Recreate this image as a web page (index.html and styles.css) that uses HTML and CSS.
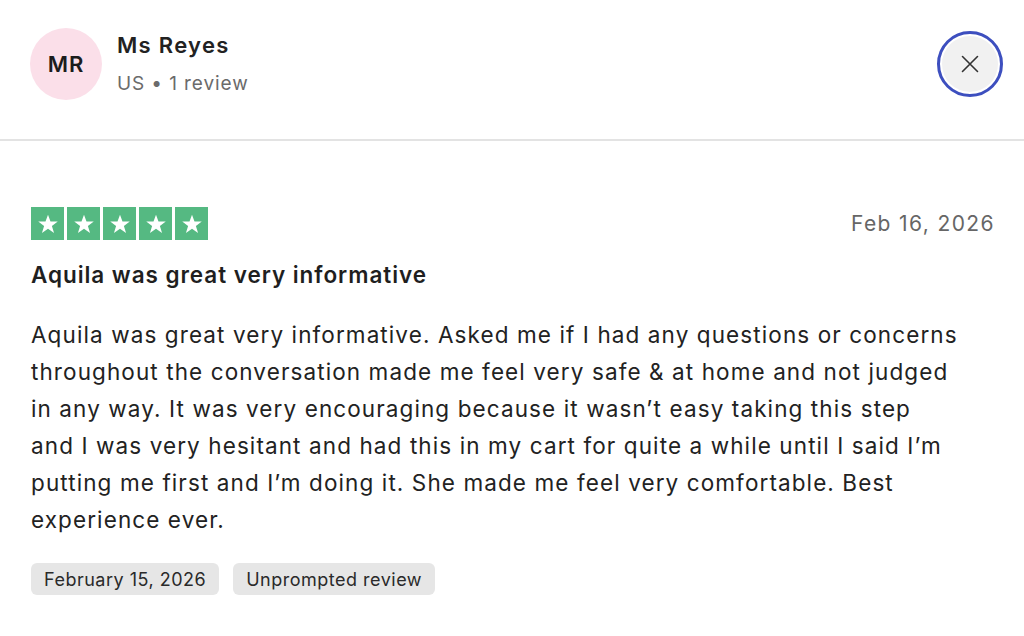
FILE: index.html
```html
<!DOCTYPE html>
<html lang="en">
<head>
<meta charset="utf-8">
<link rel="stylesheet" href="styles.css">
</head>
<body>
<div class="page">
  <header class="head">
    <div class="user">
      <div class="avatar">MR</div>
      <div class="who">
        <div class="name">Ms Reyes</div>
        <div class="meta">US • 1 review</div>
      </div>
    </div>
    <button class="close" aria-label="Close">
      <svg width="20" height="20" viewBox="0 0 20 20"><path d="M2.5 2.5L17.5 17.5M17.5 2.5L2.5 17.5" stroke="#333" stroke-width="1.6" stroke-linecap="round"/></svg>
    </button>
  </header>
  <main class="review">
    <div class="toprow">
      <div class="stars">
        <span class="star"><svg viewBox="0 0 24 24"><path d="M12 3.5l2.3 6.3h6.7l-5.4 4 2 6.5L12 16.4l-5.6 3.9 2-6.5-5.4-4h6.7z" fill="#fff"/></svg></span>
        <span class="star"><svg viewBox="0 0 24 24"><path d="M12 3.5l2.3 6.3h6.7l-5.4 4 2 6.5L12 16.4l-5.6 3.9 2-6.5-5.4-4h6.7z" fill="#fff"/></svg></span>
        <span class="star"><svg viewBox="0 0 24 24"><path d="M12 3.5l2.3 6.3h6.7l-5.4 4 2 6.5L12 16.4l-5.6 3.9 2-6.5-5.4-4h6.7z" fill="#fff"/></svg></span>
        <span class="star"><svg viewBox="0 0 24 24"><path d="M12 3.5l2.3 6.3h6.7l-5.4 4 2 6.5L12 16.4l-5.6 3.9 2-6.5-5.4-4h6.7z" fill="#fff"/></svg></span>
        <span class="star"><svg viewBox="0 0 24 24"><path d="M12 3.5l2.3 6.3h6.7l-5.4 4 2 6.5L12 16.4l-5.6 3.9 2-6.5-5.4-4h6.7z" fill="#fff"/></svg></span>
      </div>
      <div class="date">Feb 16, 2026</div>
    </div>
    <h1 class="title">Aquila was great very informative</h1>
    <p class="body">Aquila was great very informative. Asked me if I had any questions or concerns<br>throughout the conversation made me feel very safe &amp; at home and not judged<br>in any way. It was very encouraging because it wasn’t easy taking this step<br>and I was very hesitant and had this in my cart for quite a while until I said I’m<br>putting me first and I’m doing it. She made me feel very comfortable. Best<br>experience ever.</p>
    <div class="tags">
      <span class="tag">February 15, 2026</span>
      <span class="tag">Unprompted review</span>
    </div>
  </main>
</div>
</body>
</html>
```
FILE: styles.css
```css
* { box-sizing: border-box; }
html, body { margin: 0; padding: 0; background: #fff; }
body { font-family: Inter, "Liberation Sans", sans-serif; color: #1f1f1f; }
.page { width: 1024px; height: 636px; overflow: hidden; }
.head {
  display: flex; align-items: center; justify-content: space-between;
  height: 141px; padding: 0 21px 12px 30px;
  border-bottom: 2px solid #e3e3e3;
}
.user { display: flex; align-items: center; gap: 15px; }
.avatar {
  width: 72px; height: 72px; border-radius: 50%;
  background: #fbdfe9; color: #1c1c1c;
  display: flex; align-items: center; justify-content: center;
  font-size: 22px; font-weight: 600; letter-spacing: 1px;
}
.who { display: flex; flex-direction: column; gap: 14px; padding-bottom: 0; }
.name { font-size: 22px; font-weight: 600; color: #222; letter-spacing: 1.3px; line-height: 26px; }
.meta { font-size: 19px; color: #6b6b6b; letter-spacing: 0.9px; line-height: 23px; }
.close {
  width: 66px; height: 66px; border-radius: 50%;
  border: 3px solid #3d4fbf; background: #f1f1f1;
  box-shadow: inset 0 0 0 2px #fff;
  display: flex; align-items: center; justify-content: center; padding: 0;
}
.review { padding: 66px 29px 0 31px; }
.toprow { display: flex; justify-content: space-between; align-items: center; }
.stars { display: flex; gap: 3px; }
.star {
  width: 33px; height: 33px; background: #55b982;
  display: flex; align-items: center; justify-content: center;
}
.star svg { width: 26px; height: 26px; }
.date { font-size: 21px; color: #666; letter-spacing: 1.4px; }
.title { font-size: 22.5px; font-weight: 600; margin: 21px 0 0; color: #1f1f1f; letter-spacing: 0.95px; }
.body { font-size: 22.5px; line-height: 37px; margin: 28px 0 0; color: #222; letter-spacing: 1.1px; }
.tags { display: flex; gap: 14px; margin-top: 25px; }
.tag {
  background: #e6e6e6; border-radius: 6px; height: 32px; padding: 0 13px;
  display: flex; align-items: center; font-size: 18px; color: #2a2a2a; letter-spacing: 0.5px;
}
```
